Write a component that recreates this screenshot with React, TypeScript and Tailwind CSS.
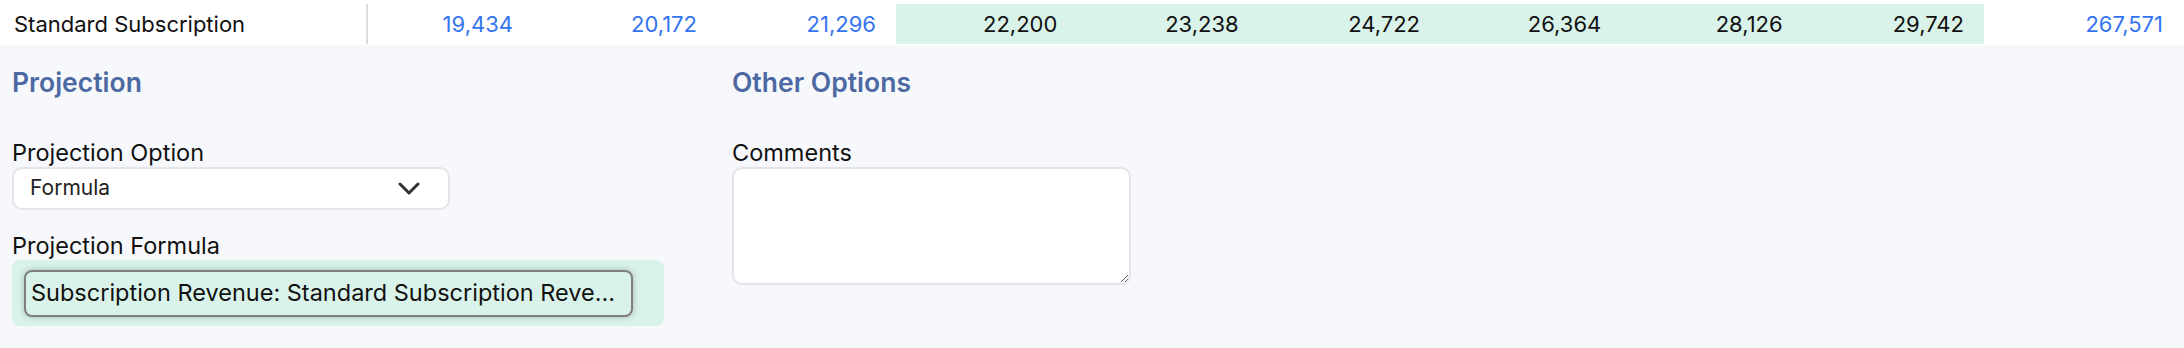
import React from "react";

const blueCols = [
  { value: "19,434", w: "w-[165px]" },
  { value: "20,172", w: "w-[184px]" },
  { value: "21,296", w: "w-[179px]" },
];

const greenCols = ["22,200", "23,238", "24,722", "26,364", "28,126", "29,742"];

const DataRow: React.FC = () => (
  <div className="flex h-[45px] bg-white pt-[4px] pb-[1px] text-[22px]">
    <div className="flex h-[40px] w-[368px] shrink-0 items-center border-r-2 border-[#dcdcdc] pl-[14px] text-[#111]">
      Standard Subscription
    </div>
    {blueCols.map((c) => (
      <div
        key={c.value}
        className={`flex h-[40px] shrink-0 items-center justify-end pr-[20px] text-[#3574ef] ${c.w}`}
      >
        {c.value}
      </div>
    ))}
    <div className="flex h-[40px] w-[1088px] shrink-0 bg-[#daf3ea]">
      {greenCols.map((v) => (
        <div
          key={v}
          className="flex flex-1 items-center justify-end pr-[20px] text-[#111]"
        >
          {v}
        </div>
      ))}
    </div>
    <div className="flex h-[40px] flex-1 items-center justify-end pr-[21px] text-[#3574ef]">
      267,571
    </div>
  </div>
);

const Label: React.FC<{ children: React.ReactNode }> = ({ children }) => (
  <div className="h-[27px] text-[23.5px] leading-[27px] text-[#111]">{children}</div>
);

const Heading: React.FC<{ children: React.ReactNode }> = ({ children }) => (
  <h2 className="h-[30px] text-[26.5px] font-semibold leading-[30px] text-[#4d69a3]">
    {children}
  </h2>
);

const App: React.FC = () => {
  return (
    <div
      className="min-h-[348px] bg-[#f7f8fb]"
      style={{ fontFamily: "Inter, 'Noto Sans', sans-serif" }}
    >
      <DataRow />

      <div className="flex pl-[12px] pt-[22px]">
        {/* Projection */}
        <div className="w-[720px] shrink-0">
          <Heading>Projection</Heading>
          <div className="mt-[41.5px]">
            <Label>Projection Option</Label>
          </div>
          <div className="mt-[1px] flex h-[43px] w-[438px] items-center justify-between rounded-[10px] border-2 border-[#e3e5e9] bg-white pl-[16px] pr-[28px]">
            <span className="text-[21px] text-[#222]">Formula</span>
            <svg width="22" height="13" viewBox="0 0 22 13" fill="none">
              <polyline
                points="2,2 11,11 20,2"
                stroke="#333"
                strokeWidth="3"
                strokeLinecap="round"
                strokeLinejoin="round"
              />
            </svg>
          </div>
          <div className="mt-[22px]">
            <Label>Projection Formula</Label>
          </div>
          <div className="mt-[1.5px] flex h-[66px] w-[652px] items-center rounded-[8px] bg-[#daf3ea] pl-[12px]">
            <button className="flex h-[47px] w-[609px] items-center rounded-[8px] border-2 border-[#7f7f7f] bg-[#daf3ea] pl-[5px] pr-[4px] text-left shadow-[0_0_6px_rgba(0,0,0,0.25)]">
              <span className="whitespace-nowrap text-[23.5px] text-[#111]">
                Subscription Revenue: Standard Subscription Reve...
              </span>
            </button>
          </div>
        </div>

        {/* Other Options */}
        <div className="flex-1">
          <Heading>Other Options</Heading>
          <div className="mt-[41.5px]">
            <Label>Comments</Label>
          </div>
          <textarea className="mt-[1px] block h-[118px] w-[399px] rounded-[10px] border-2 border-[#e2e4e8] bg-white outline-none" />
        </div>
      </div>
    </div>
  );
};

export default App;
